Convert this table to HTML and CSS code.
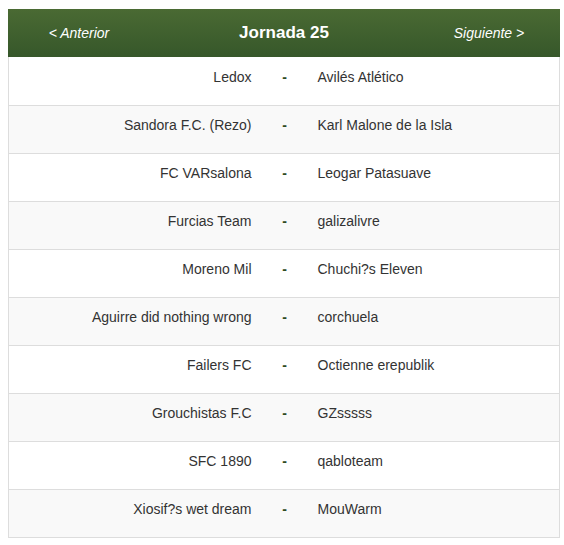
FILE: index.html
```html
<!DOCTYPE html>
<html>
<head>
<meta charset="utf-8">
<link rel="stylesheet" href="styles.css">
</head>
<body>
<div class="round">
  <div class="round-head">
    <a class="nav">&lt; Anterior</a>
    <div class="title">Jornada 25</div>
    <a class="nav">Siguiente &gt;</a>
  </div>
  <table class="matches">
    <tr><td class="home">Ledox</td><td class="sep">-</td><td class="away">Avilés Atlético</td></tr>
    <tr><td class="home">Sandora F.C. (Rezo)</td><td class="sep">-</td><td class="away">Karl Malone de la Isla</td></tr>
    <tr><td class="home">FC VARsalona</td><td class="sep">-</td><td class="away">Leogar Patasuave</td></tr>
    <tr><td class="home">Furcias Team</td><td class="sep">-</td><td class="away">galizalivre</td></tr>
    <tr><td class="home">Moreno Mil</td><td class="sep">-</td><td class="away">Chuchi?s Eleven</td></tr>
    <tr><td class="home">Aguirre did nothing wrong</td><td class="sep">-</td><td class="away">corchuela</td></tr>
    <tr><td class="home">Failers FC</td><td class="sep">-</td><td class="away">Octienne erepublik</td></tr>
    <tr><td class="home">Grouchistas F.C</td><td class="sep">-</td><td class="away">GZsssss</td></tr>
    <tr><td class="home">SFC 1890</td><td class="sep">-</td><td class="away">qabloteam</td></tr>
    <tr><td class="home">Xiosif?s wet dream</td><td class="sep">-</td><td class="away">MouWarm</td></tr>
  </table>
</div>
</body>
</html>
```
FILE: styles.css
```css
html, body {
  margin: 0;
  padding: 0;
  background: #fff;
}
body {
  padding: 9px 4px 0 8px;
  font-family: "Liberation Sans", Arial, sans-serif;
  font-size: 14px;
  color: #333;
}
.round {
  width: 552px;
}
.round-head {
  display: grid;
  grid-template-columns: 142px 1fr 142px;
  align-items: center;
  height: 48px;
  background: linear-gradient(to bottom, #4a6a33, #36572a);
  color: #fff;
}
.nav {
  text-align: center;
  font-style: italic;
  font-size: 14px;
  color: #fff;
}
.title {
  text-align: center;
  font-weight: bold;
  font-size: 17px;
}
.matches {
  width: 552px;
  border-collapse: collapse;
  border: 1px solid #ddd;
  border-top: 0;
  table-layout: fixed;
}
.matches tr {
  height: 48px;
}
.matches tr:nth-child(even) {
  background: #f9f9f9;
}
.matches td {
  padding: 9px 8px 7px;
  border-top: 1px solid #ddd;
  vertical-align: top;
  line-height: 20px;
  height: 47px;
  box-sizing: border-box;
}
.matches tr:first-child td {
  border-top: 0;
  padding-top: 10px;
  padding-bottom: 6px;
  height: 48px;
}
.home {
  width: 251px;
  text-align: right;
}
.sep {
  width: 50px;
  text-align: center;
  font-weight: bold;
  color: #2e4a22;
}
.away {
  text-align: left;
}
```
